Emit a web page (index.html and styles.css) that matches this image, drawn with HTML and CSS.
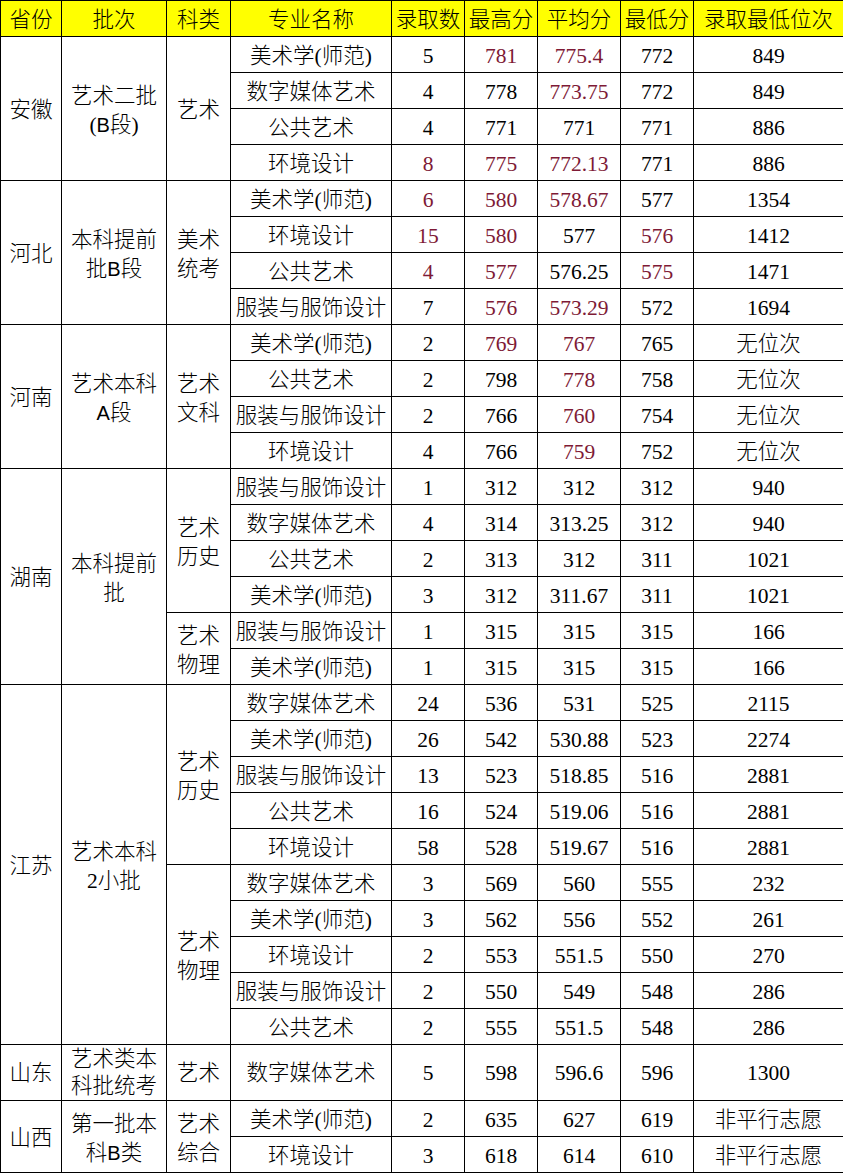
FILE: index.html
```html
<!DOCTYPE html>
<html lang="zh-CN">
<head>
<meta charset="utf-8">
<title>录取分数</title>
<link rel="stylesheet" href="styles.css">
</head>
<body>
<table class="adm">
  <colgroup>
    <col class="c-prov">
    <col class="c-batch">
    <col class="c-type">
    <col class="c-major">
    <col class="c-num">
    <col class="c-max">
    <col class="c-avg">
    <col class="c-min">
    <col class="c-rank">
  </colgroup>
  <thead>
    <tr>
      <th>省份</th><th>批次</th><th>科类</th><th>专业名称</th><th>录取数</th><th>最高分</th><th>平均分</th><th>最低分</th><th>录取最低位次</th>
    </tr>
  </thead>
  <tbody>
    <tr>
      <td rowspan="4">安徽</td>
      <td rowspan="4">艺术二批<br>(<span class="lat">B</span>段)</td>
      <td rowspan="4">艺术</td>
      <td>美术学(师范)</td><td>5</td><td class="red">781</td><td class="red">775.4</td><td>772</td><td>849</td>
    </tr>
    <tr><td>数字媒体艺术</td><td>4</td><td>778</td><td class="red">773.75</td><td>772</td><td>849</td></tr>
    <tr><td>公共艺术</td><td>4</td><td>771</td><td>771</td><td>771</td><td>886</td></tr>
    <tr><td>环境设计</td><td class="red">8</td><td class="red">775</td><td class="red">772.13</td><td>771</td><td>886</td></tr>

    <tr>
      <td rowspan="4">河北</td>
      <td rowspan="4">本科提前<br>批<span class="lat">B</span>段</td>
      <td rowspan="4">美术<br>统考</td>
      <td>美术学(师范)</td><td class="red">6</td><td class="red">580</td><td class="red">578.67</td><td>577</td><td>1354</td>
    </tr>
    <tr><td>环境设计</td><td class="red">15</td><td class="red">580</td><td>577</td><td class="red">576</td><td>1412</td></tr>
    <tr><td>公共艺术</td><td class="red">4</td><td class="red">577</td><td>576.25</td><td class="red">575</td><td>1471</td></tr>
    <tr><td>服装与服饰设计</td><td>7</td><td class="red">576</td><td class="red">573.29</td><td>572</td><td>1694</td></tr>

    <tr>
      <td rowspan="4">河南</td>
      <td rowspan="4">艺术本科<br><span class="lat">A</span>段</td>
      <td rowspan="4">艺术<br>文科</td>
      <td>美术学(师范)</td><td>2</td><td class="red">769</td><td class="red">767</td><td>765</td><td>无位次</td>
    </tr>
    <tr><td>公共艺术</td><td>2</td><td>798</td><td class="red">778</td><td>758</td><td>无位次</td></tr>
    <tr><td>服装与服饰设计</td><td>2</td><td>766</td><td class="red">760</td><td>754</td><td>无位次</td></tr>
    <tr><td>环境设计</td><td>4</td><td>766</td><td class="red">759</td><td>752</td><td>无位次</td></tr>

    <tr>
      <td rowspan="6">湖南</td>
      <td rowspan="6">本科提前<br>批</td>
      <td rowspan="4">艺术<br>历史</td>
      <td>服装与服饰设计</td><td>1</td><td>312</td><td>312</td><td>312</td><td>940</td>
    </tr>
    <tr><td>数字媒体艺术</td><td>4</td><td>314</td><td>313.25</td><td>312</td><td>940</td></tr>
    <tr><td>公共艺术</td><td>2</td><td>313</td><td>312</td><td>311</td><td>1021</td></tr>
    <tr><td>美术学(师范)</td><td>3</td><td>312</td><td>311.67</td><td>311</td><td>1021</td></tr>
    <tr>
      <td rowspan="2">艺术<br>物理</td>
      <td>服装与服饰设计</td><td>1</td><td>315</td><td>315</td><td>315</td><td>166</td>
    </tr>
    <tr><td>美术学(师范)</td><td>1</td><td>315</td><td>315</td><td>315</td><td>166</td></tr>

    <tr>
      <td rowspan="10">江苏</td>
      <td rowspan="10">艺术本科<br>2小批</td>
      <td rowspan="5">艺术<br>历史</td>
      <td>数字媒体艺术</td><td>24</td><td>536</td><td>531</td><td>525</td><td>2115</td>
    </tr>
    <tr><td>美术学(师范)</td><td>26</td><td>542</td><td>530.88</td><td>523</td><td>2274</td></tr>
    <tr><td>服装与服饰设计</td><td>13</td><td>523</td><td>518.85</td><td>516</td><td>2881</td></tr>
    <tr><td>公共艺术</td><td>16</td><td>524</td><td>519.06</td><td>516</td><td>2881</td></tr>
    <tr><td>环境设计</td><td>58</td><td>528</td><td>519.67</td><td>516</td><td>2881</td></tr>
    <tr>
      <td rowspan="5">艺术<br>物理</td>
      <td>数字媒体艺术</td><td>3</td><td>569</td><td>560</td><td>555</td><td>232</td>
    </tr>
    <tr><td>美术学(师范)</td><td>3</td><td>562</td><td>556</td><td>552</td><td>261</td></tr>
    <tr><td>环境设计</td><td>2</td><td>553</td><td>551.5</td><td>550</td><td>270</td></tr>
    <tr><td>服装与服饰设计</td><td>2</td><td>550</td><td>549</td><td>548</td><td>286</td></tr>
    <tr><td>公共艺术</td><td>2</td><td>555</td><td>551.5</td><td>548</td><td>286</td></tr>

    <tr class="tall">
      <td>山东</td>
      <td>艺术类本<br>科批统考</td>
      <td>艺术</td>
      <td>数字媒体艺术</td><td>5</td><td>598</td><td>596.6</td><td>596</td><td>1300</td>
    </tr>

    <tr>
      <td rowspan="2">山西</td>
      <td rowspan="2">第一批本<br>科<span class="lat">B</span>类</td>
      <td rowspan="2">艺术<br>综合</td>
      <td>美术学(师范)</td><td>2</td><td>635</td><td>627</td><td>619</td><td>非平行志愿</td>
    </tr>
    <tr><td>环境设计</td><td>3</td><td>618</td><td>614</td><td>610</td><td>非平行志愿</td></tr>
  </tbody>
</table>
</body>
</html>
```

FILE: styles.css
```css
html, body {
  margin: 0;
  padding: 0;
  background: #ffffff;
}

.adm {
  border-collapse: collapse;
  table-layout: fixed;
  width: 843px;
  font-family: "Liberation Serif", "Noto Sans CJK SC", serif;
  font-size: 21.5px;
  font-weight: 300;
  color: #000;
}

.c-prov { width: 61px; }
.c-batch { width: 105px; }
.c-type { width: 64px; }
.c-major { width: 161px; }
.c-num { width: 73px; }
.c-max { width: 73px; }
.c-avg { width: 83px; }
.c-min { width: 73px; }
.c-rank { width: 150px; }

.adm th,
.adm td {
  border: 1px solid #000;
  padding: 4px 0 0 0;
  text-align: center;
  vertical-align: middle;
  line-height: 29px;
  font-weight: 300;
  white-space: nowrap;
  overflow: hidden;
}

.adm tr {
  height: 36px;
}

.adm tr.tall {
  height: 56px;
}

.adm tr.tall td {
  padding: 1px 0 0 0;
  line-height: 27px;
}

.adm thead th {
  background: #ffff00;
}

.lat {
  font-family: "Liberation Sans", sans-serif;
  font-size: 20px;
}

.red {
  color: #7e1a36;
}
```
